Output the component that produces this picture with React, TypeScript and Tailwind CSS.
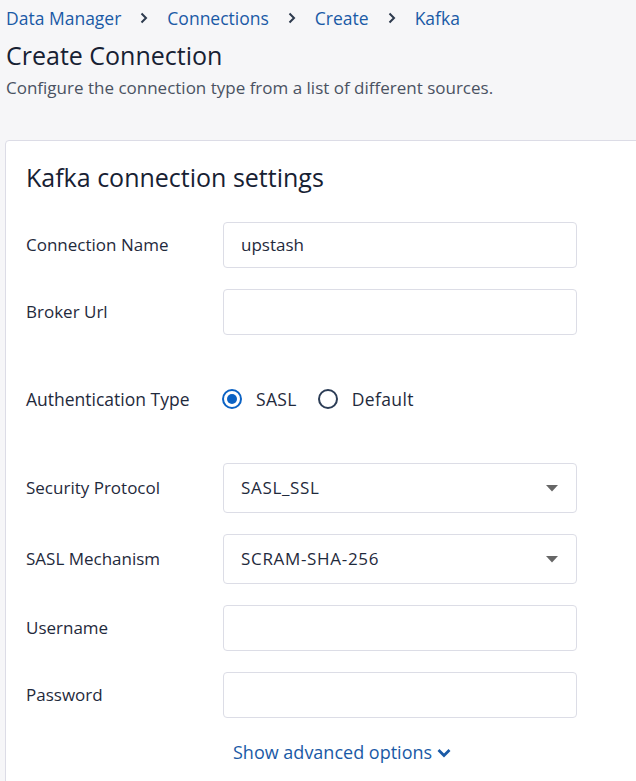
import React from "react";

const font = { fontFamily: "'Open Sans', 'Noto Sans', sans-serif" };

function Crumbs() {
  const items = ["Data Manager", "Connections", "Create", "Kafka"];
  return (
    <div className="flex items-center h-[36px] text-[17.5px] text-[#1a5aa6]">
      {items.map((it, i) => (
        <React.Fragment key={it}>
          {i > 0 && (
            <svg width="8" height="12" viewBox="0 0 8 12" className="mx-[19px]">
              <path d="M1.5 1.5 L6 6 L1.5 10.5" fill="none" stroke="#2d3a4e" strokeWidth="2" />
            </svg>
          )}
          <span>{it}</span>
        </React.Fragment>
      ))}
    </div>
  );
}

function TextRow({ label, value }: { label: string; value?: string }) {
  return (
    <div className="flex items-center">
      <div className="w-[197px] text-[17px] text-[#1f2a3c]">{label}</div>
      <div className="w-[354px] h-[46px] rounded-[4px] border border-[#dcdde6] bg-white flex items-center px-[17px] text-[17px] text-[#1f2a3c]">
        {value}
      </div>
    </div>
  );
}

function SelectRow({ label, value }: { label: string; value: string }) {
  return (
    <div className="flex items-center">
      <div className="w-[197px] text-[17px] text-[#1f2a3c]">{label}</div>
      <div className="w-[354px] h-[50px] rounded-[4px] border border-[#dcdde6] bg-white flex items-center justify-between pl-[17px] pr-[18px] text-[17px] tracking-[0.04em] text-[#1f2a3c]">
        <span>{value}</span>
        <svg width="12" height="7" viewBox="0 0 12 7">
          <path d="M0 0 H12 L6 6.5 Z" fill="#666" />
        </svg>
      </div>
    </div>
  );
}

function Radio({ checked, label }: { checked?: boolean; label: string }) {
  return (
    <div className="flex items-center">
      <span
        className={`w-[20px] h-[20px] rounded-full border-2 flex items-center justify-center ${
          checked ? "border-[#0b62c4]" : "border-[#2c3d56]"
        }`}
      >
        {checked && <span className="w-[10px] h-[10px] rounded-full bg-[#0b62c4]" />}
      </span>
      <span className="ml-[14px] text-[17.5px] font-medium tracking-[0.02em] text-[#1f2a3c]">{label}</span>
    </div>
  );
}

export default function App() {
  return (
    <div style={font} className="w-[636px] h-[781px] overflow-hidden bg-[#f6f6f8]">
      <div className="pl-[6px]">
        <Crumbs />
        <h1 className="mt-[3px] text-[25px] leading-[32px] text-[#172133]">Create Connection</h1>
        <p className="mt-[5px] text-[17px] leading-[24px] text-[#4a5262]">
          Configure the connection type from a list of different sources.
        </p>
      </div>
      <div className="mt-[40px] ml-[5px] w-[660px] h-[700px] bg-white border border-[#dcdce6] rounded-tl-[4px] pl-[20px] pt-[20px]">
        <h2 className="text-[25px] leading-[32px] text-[#172133]">Kafka connection settings</h2>
        <div className="mt-[29px] flex flex-col">
          <TextRow label="Connection Name" value="upstash" />
          <div className="mt-[21px]">
            <TextRow label="Broker Url" />
          </div>
          <div className="mt-[52px] flex items-center h-[24px]">
            <div className="w-[196px] text-[17.5px] font-medium text-[#1f2a3c]">Authentication Type</div>
            <Radio checked label="SASL" />
            <div className="ml-[21px]">
              <Radio label="Default" />
            </div>
          </div>
          <div className="mt-[52px]">
            <SelectRow label="Security Protocol" value="SASL_SSL" />
          </div>
          <div className="mt-[21px]">
            <SelectRow label="SASL Mechanism" value="SCRAM-SHA-256" />
          </div>
          <div className="mt-[21px]">
            <TextRow label="Username" />
          </div>
          <div className="mt-[21px]">
            <TextRow label="Password" />
          </div>
          <div className="mt-[21px] ml-[207px] flex items-center text-[18px] text-[#1a5aa6]">
            <span>Show advanced options</span>
            <svg width="16" height="10" viewBox="0 0 16 10" className="ml-[4px]">
              <path d="M2.5 2 L8 7.5 L13.5 2" fill="none" stroke="#1a5aa6" strokeWidth="2.8" />
            </svg>
          </div>
        </div>
      </div>
    </div>
  );
}
